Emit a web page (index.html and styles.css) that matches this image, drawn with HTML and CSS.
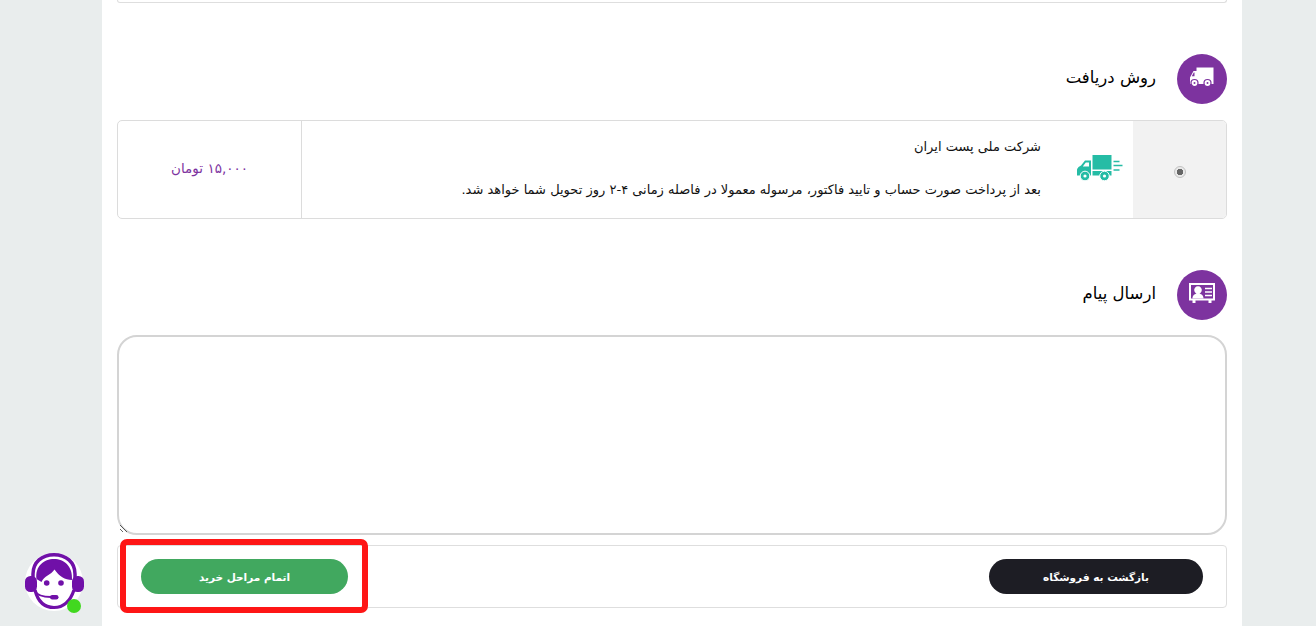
FILE: index.html
```html
<!DOCTYPE html>
<html lang="fa" dir="rtl">
<head>
    <meta charset="UTF-8">
    <meta name="viewport" content="width=device-width, initial-scale=1">
    <title>تکمیل خرید</title>
    <link rel="stylesheet" href="styles.css">
</head>
<body>

<div class="container">
    <div class="prev-card"></div>

    <div class="section-head">
        <span class="head-icon">
            <svg width="24" height="20" viewBox="0 0 24 20">
                <path fill="#fff" d="M6.500.5h17V17H6.500z"/>
                <path fill="#fff" fill-rule="evenodd" d="M7 4v13H0v-6.500L3.500 4zM4.500 5.500H3.800L1.800 9.300h2.700z"/>
                <circle fill="#fff" stroke="#7d339f" stroke-width="1.200" cx="4.500" cy="16" r="3.500"/>
                <circle fill="#7d339f" cx="4.500" cy="16" r="1"/>
                <circle fill="#fff" stroke="#7d339f" stroke-width="1.200" cx="17.500" cy="16" r="3.500"/>
                <circle fill="#7d339f" cx="17.500" cy="16" r="1"/>
            </svg>
        </span>
        <h2>روش دریافت</h2>
    </div>

    <div class="shipping">
        <div class="ship-radio">
            <span class="radio-mark"></span>
        </div>
        <div class="ship-icon">
            <svg width="46" height="26" viewBox="0 0 46 26">
                <path fill="#25bca5" d="M15.500 0h19v14.500h-19zM15.500 16h19v4.500h-19z"/>
                <path fill="#25bca5" fill-rule="evenodd" d="M14 5.500v15H0v-5C0 12 3 11.500 4 10.500L8 5.500zM12 7.500H8.800L5.800 11.500H12z"/>
                <circle fill="#25bca5" stroke="#fff" cx="8" cy="21" r="4.800"/>
                <circle fill="#fff" cx="8" cy="21" r="1.600"/>
                <circle fill="#25bca5" stroke="#fff" cx="27.500" cy="21" r="4.800"/>
                <circle fill="#fff" cx="27.500" cy="21" r="1.600"/>
                <path stroke="#25bca5" stroke-width="1.500" d="M36.500 6.500h6M36.500 10.500h9M36.500 15h6"/>
            </svg>
        </div>
        <div class="ship-text">
            <p>شرکت ملی پست ایران</p>
            <p>بعد از پرداخت صورت حساب و تایید فاکتور، مرسوله معمولا در فاصله زمانی ۴-۲ روز تحویل شما خواهد شد.</p>
        </div>
        <div class="ship-price">۱۵,۰۰۰ تومان</div>
    </div>

    <div class="section-head">
        <span class="head-icon">
            <svg width="26" height="20" viewBox="0 0 26 20">
                <path fill="none" stroke="#fff" stroke-width="2" d="M1 1h24v15.500H1z"/>
                <path fill="#fff" d="M3.500 16h3v4h-3zM19.500 16h3v4h-3zM3.500 15.500c0-3.500 2-4 4-5a3.800 3.800 0 1 1 3 0c2 1 4 1.500 4 5z"/>
                <path stroke="#fff" stroke-width="1.500" d="M16 5.500h7M16 9h7M16 12.500h7"/>
            </svg>
        </span>
        <h2>ارسال پیام</h2>
    </div>

    <textarea class="message"></textarea>

    <div class="actions">
        <button class="btn btn-dark">بازگشت به فروشگاه</button>
        <button class="btn btn-green">اتمام مراحل خرید</button>
        <div class="highlight"></div>
    </div>
</div>

<div class="support">
    <svg width="60" height="60" viewBox="0 0 60 60">
        <circle fill="#fff" cx="30" cy="30" r="29"/>
        <path fill="none" stroke="#7010a8" stroke-width="3.500" d="M9 27v-5C9 10 18 2.700 30 2.700S51 10 51 22v5"/>
        <path fill="#7010a8" d="M12.500 27C11 14 20 7 30 7s19 7 18 21c-7 0-13-4-17.500-10.500C27 23 20 24 17.500 30c-1.500-1-3.500-2-5-3z"/>
        <rect fill="#7010a8" x="1" y="24" width="12" height="16" rx="5.500"/>
        <rect fill="#7010a8" x="48" y="24" width="12" height="16" rx="5.500"/>
        <path fill="none" stroke="#7010a8" stroke-width="3.200" d="M11 38c3 12 10 17.500 19 17.500S46 50 50 38"/>
        <circle fill="#7010a8" cx="22.700" cy="31" r="2.800"/>
        <circle fill="#7010a8" cx="37" cy="31" r="2.800"/>
        <path fill="none" stroke="#7010a8" stroke-width="1.800" d="M11 39c2 4 8 6 16 6"/>
        <rect fill="#7010a8" x="26" y="43" width="8.500" height="4.500" rx="2.200"/>
    </svg>
    <span class="online"></span>
</div>

</body>
</html>
```

FILE: styles.css
```css
html, body {
    height: 100%;
}

body {
    font-family: "DejaVu Sans", sans-serif;
    margin: 0;
    background-color: #e9eded;
    overflow: hidden;
    color: #111;
}

.container {
    box-sizing: border-box;
    height: 100%;
    margin: 0 74px 0 102px;
    padding: 0 15px;
    background-color: #fff;
}

.prev-card {
    height: 2px;
    border: 1px solid #dedede;
    border-top: none;
    border-radius: 0 0 5px 5px;
}

.section-head {
    display: flex;
    align-items: center;
    gap: 21px;
    margin-top: 51px;
}

.head-icon {
    display: flex;
    align-items: center;
    justify-content: center;
    width: 50px;
    height: 50px;
    border-radius: 50%;
    background-color: #7d339f;
}

.head-icon svg {
    margin-bottom: 5px;
}

.section-head h2 {
    margin: 0 0 4px;
    font-size: 16.500px;
    font-weight: normal;
    color: #000;
}

.shipping {
    display: flex;
    box-sizing: border-box;
    height: 99px;
    margin-top: 16px;
    border: 1px solid #dcdcdc;
    border-radius: 5px;
    overflow: hidden;
}

.ship-radio {
    display: flex;
    align-items: center;
    justify-content: center;
    box-sizing: border-box;
    width: 93px;
    padding: 4px 0 0 1px;
    background-color: #f2f2f2;
}

.radio-mark {
    box-sizing: border-box;
    width: 12px;
    height: 12px;
    border: 1px solid #c2c2c2;
    border-radius: 50%;
    background: radial-gradient(circle, #666 0 3px, #e9e9e9 3.500px);
}

.ship-icon {
    display: flex;
    align-items: center;
    box-sizing: border-box;
    width: 92px;
    padding: 0 10px 4px 0;
}

.ship-text {
    flex: 1;
    padding-top: 16px;
    font-size: 13px;
}

.ship-text p {
    margin: 0 0 23px;
    line-height: 20px;
}

.ship-price {
    display: flex;
    align-items: center;
    justify-content: center;
    width: 183px;
    padding-bottom: 4px;
    border-right: 1px solid #dcdcdc;
    font-size: 13.500px;
    color: #7d339f;
}

.message {
    display: block;
    box-sizing: border-box;
    width: 100%;
    height: 200px;
    margin-top: 15px;
    border: 2px solid #d4d4d4;
    border-radius: 20px;
    outline: none;
}

.actions {
    position: relative;
    display: flex;
    justify-content: space-between;
    align-items: center;
    box-sizing: border-box;
    height: 63px;
    margin-top: 10px;
    padding: 0 23px;
    border: 1px solid #dedede;
    border-radius: 4px;
}

.btn {
    height: 35px;
    border: none;
    border-radius: 18px;
    color: #fff;
    font-family: inherit;
    font-size: 10.500px;
    font-weight: bold;
}

.btn-dark {
    width: 214px;
    background-color: #1d1d24;
}

.btn-green {
    width: 207px;
    background-color: #41a85f;
}

.highlight {
    position: absolute;
    left: 2px;
    top: -7px;
    width: 236px;
    height: 62px;
    border: 6px solid #fe1616;
    border-radius: 7px;
}

.support {
    position: fixed;
    left: 24px;
    top: 552px;
    width: 60px;
    height: 60px;
}

.online {
    position: absolute;
    right: 3px;
    bottom: -1px;
    width: 14px;
    height: 14px;
    border-radius: 50%;
    background-color: #41d81f;
}
```
